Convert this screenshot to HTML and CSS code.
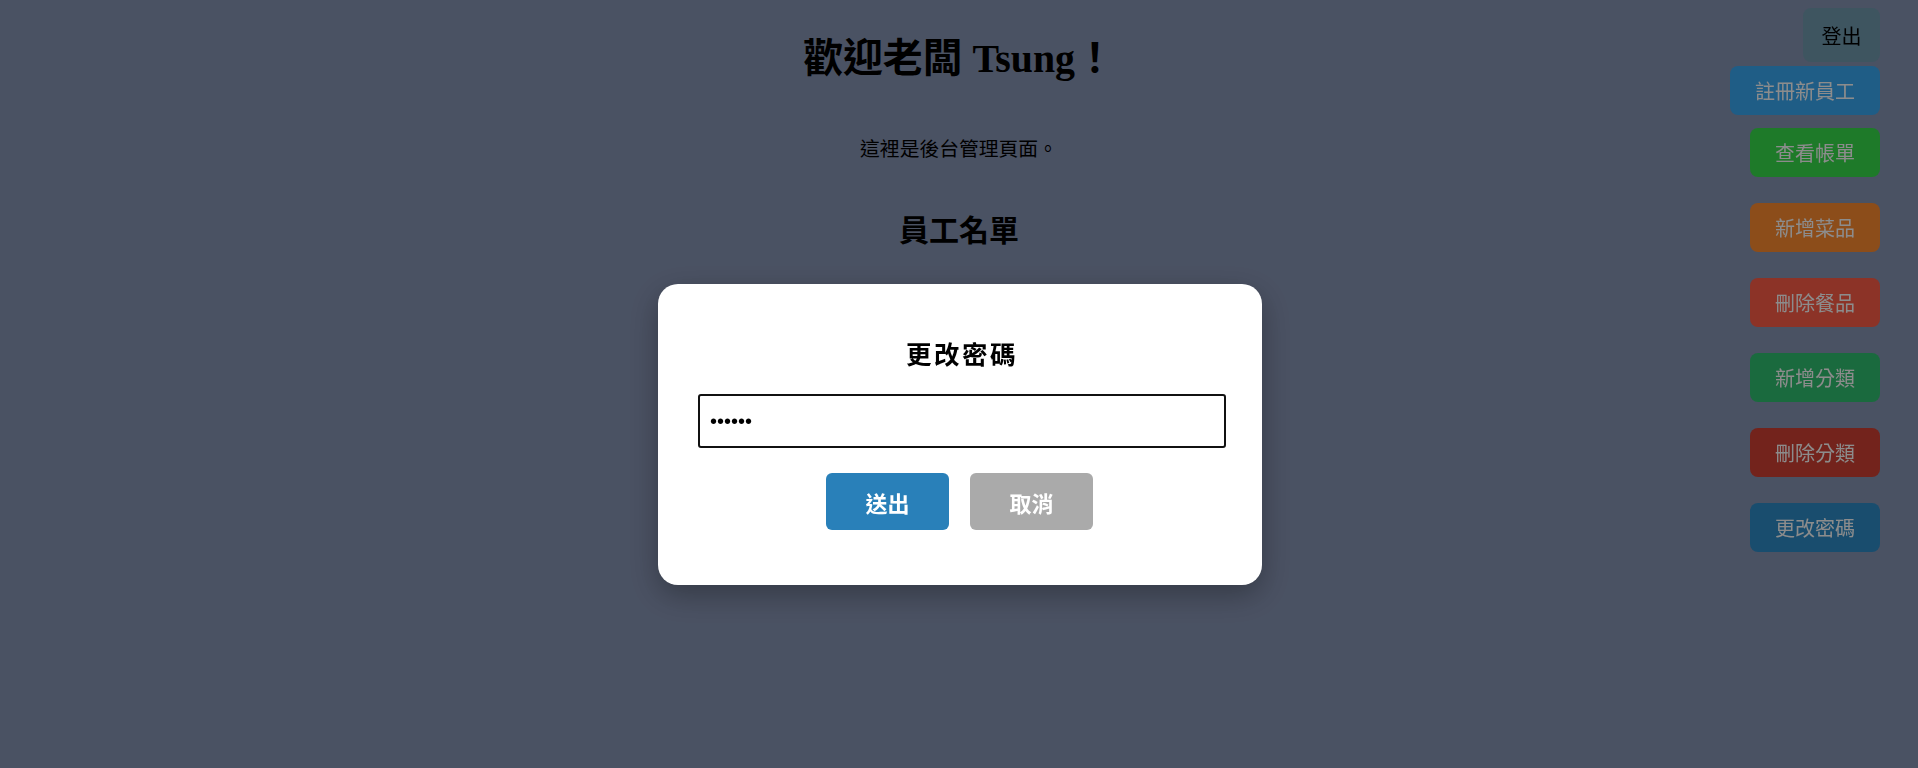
FILE: index.html
```html
<!DOCTYPE html>
<html lang="zh-Hant">
<head>
<meta charset="utf-8">
<title>後台管理</title>
<link rel="stylesheet" href="styles.css">
</head>
<body>
<main class="page">
  <h1 class="title">歡迎老闆 Tsung！</h1>
  <p class="intro">這裡是後台管理頁面。</p>
  <h2 class="subtitle">員工名單</h2>
</main>

<nav class="actions">
  <button class="btn btn-logout">登出</button>
  <button class="btn btn-register">註冊新員工</button>
  <button class="btn btn-bill">查看帳單</button>
  <button class="btn btn-add-dish">新增菜品</button>
  <button class="btn btn-del-dish">刪除餐品</button>
  <button class="btn btn-add-cat">新增分類</button>
  <button class="btn btn-del-cat">刪除分類</button>
  <button class="btn btn-password">更改密碼</button>
</nav>

<div class="overlay">
  <div class="modal">
    <h3 class="modal-title">更改密碼</h3>
    <input class="modal-input" type="password" value="123456" autofocus>
    <div class="modal-actions">
      <button class="mbtn mbtn-submit">送出</button>
      <button class="mbtn mbtn-cancel">取消</button>
    </div>
  </div>
</div>
</body>
</html>
```

FILE: styles.css
```css
* { box-sizing: border-box; }

html, body {
  margin: 0;
  padding: 0;
  height: 100%;
}

body {
  background: #8895b4;
  font-family: "Noto Sans CJK TC", "Noto Sans", sans-serif;
  color: #000;
  overflow: hidden;
}

.page {
  text-align: center;
}

.title {
  margin: 35px 0 0;
  font-family: "Liberation Serif", "Noto Sans CJK TC", serif;
  font-size: 39.8px;
  line-height: 48px;
  font-weight: 700;
}

.intro {
  margin: 52px 0 0;
  font-size: 19.8px;
  line-height: 25px;
}

.subtitle {
  margin: 53px 0 0;
  font-family: "Liberation Serif", "Noto Sans CJK TC", serif;
  font-size: 30px;
  line-height: 35px;
  font-weight: 700;
}

.actions {
  position: fixed;
  top: 8px;
  right: 38px;
  display: flex;
  flex-direction: column;
  align-items: flex-end;
}

.btn {
  border: none;
  border-radius: 8px;
  height: 49px;
  padding: 0 25px;
  font-family: "Noto Sans CJK TC", "Noto Sans", sans-serif;
  font-size: 20px;
  color: #fff;
  margin-top: 26px;
  cursor: pointer;
}

.btn-logout {
  margin-top: 0;
  height: 54px;
  padding: 0 18.5px;
  background: #719bb0;
  color: #000;
}

.btn-register {
  margin-top: 4px;
  background: #3aa9f4;
}

.btn-bill {
  margin-top: 13px;
  background: #38de4c;
}

.btn-add-dish { background: #ff8c31; }
.btn-del-dish { background: #ff5d47; }
.btn-add-cat  { background: #31c171; }
.btn-del-cat  { background: #d14033; }
.btn-password { background: #2f8cc8; }

.overlay {
  position: fixed;
  inset: 0;
  background: rgba(0, 0, 0, 0.45);
  display: flex;
  justify-content: center;
  align-items: flex-start;
  padding-top: 284px;
  padding-left: 2px;
}

.modal {
  width: 604px;
  background: #fff;
  border-radius: 20px;
  padding: 52px 36px 55px 40px;
  box-shadow: 0 10px 30px rgba(0, 0, 0, 0.3);
  text-align: center;
}

.modal-title {
  margin: 0;
  font-size: 25.5px;
  line-height: 34px;
  font-weight: 700;
  letter-spacing: 2.5px;
}

.modal-input {
  display: block;
  width: 100%;
  height: 54px;
  margin-top: 24px;
  padding: 0 10px;
  border: 2px solid #111;
  border-radius: 3px;
  font-size: 20px;
  font-family: "Liberation Sans", sans-serif;
  outline: none;
}

.modal-input:focus {
  outline: none;
}

.modal-actions {
  display: flex;
  justify-content: center;
  gap: 21px;
  margin-top: 25px;
  padding-right: 5px;
}

.mbtn {
  width: 123px;
  height: 57px;
  border: none;
  border-radius: 6px;
  color: #fff;
  font-family: "Noto Sans CJK TC", "Noto Sans", sans-serif;
  font-size: 22px;
  font-weight: 700;
  cursor: pointer;
}

.mbtn-submit { background: #2980b9; }
.mbtn-cancel { background: #aaaaaa; }
```
